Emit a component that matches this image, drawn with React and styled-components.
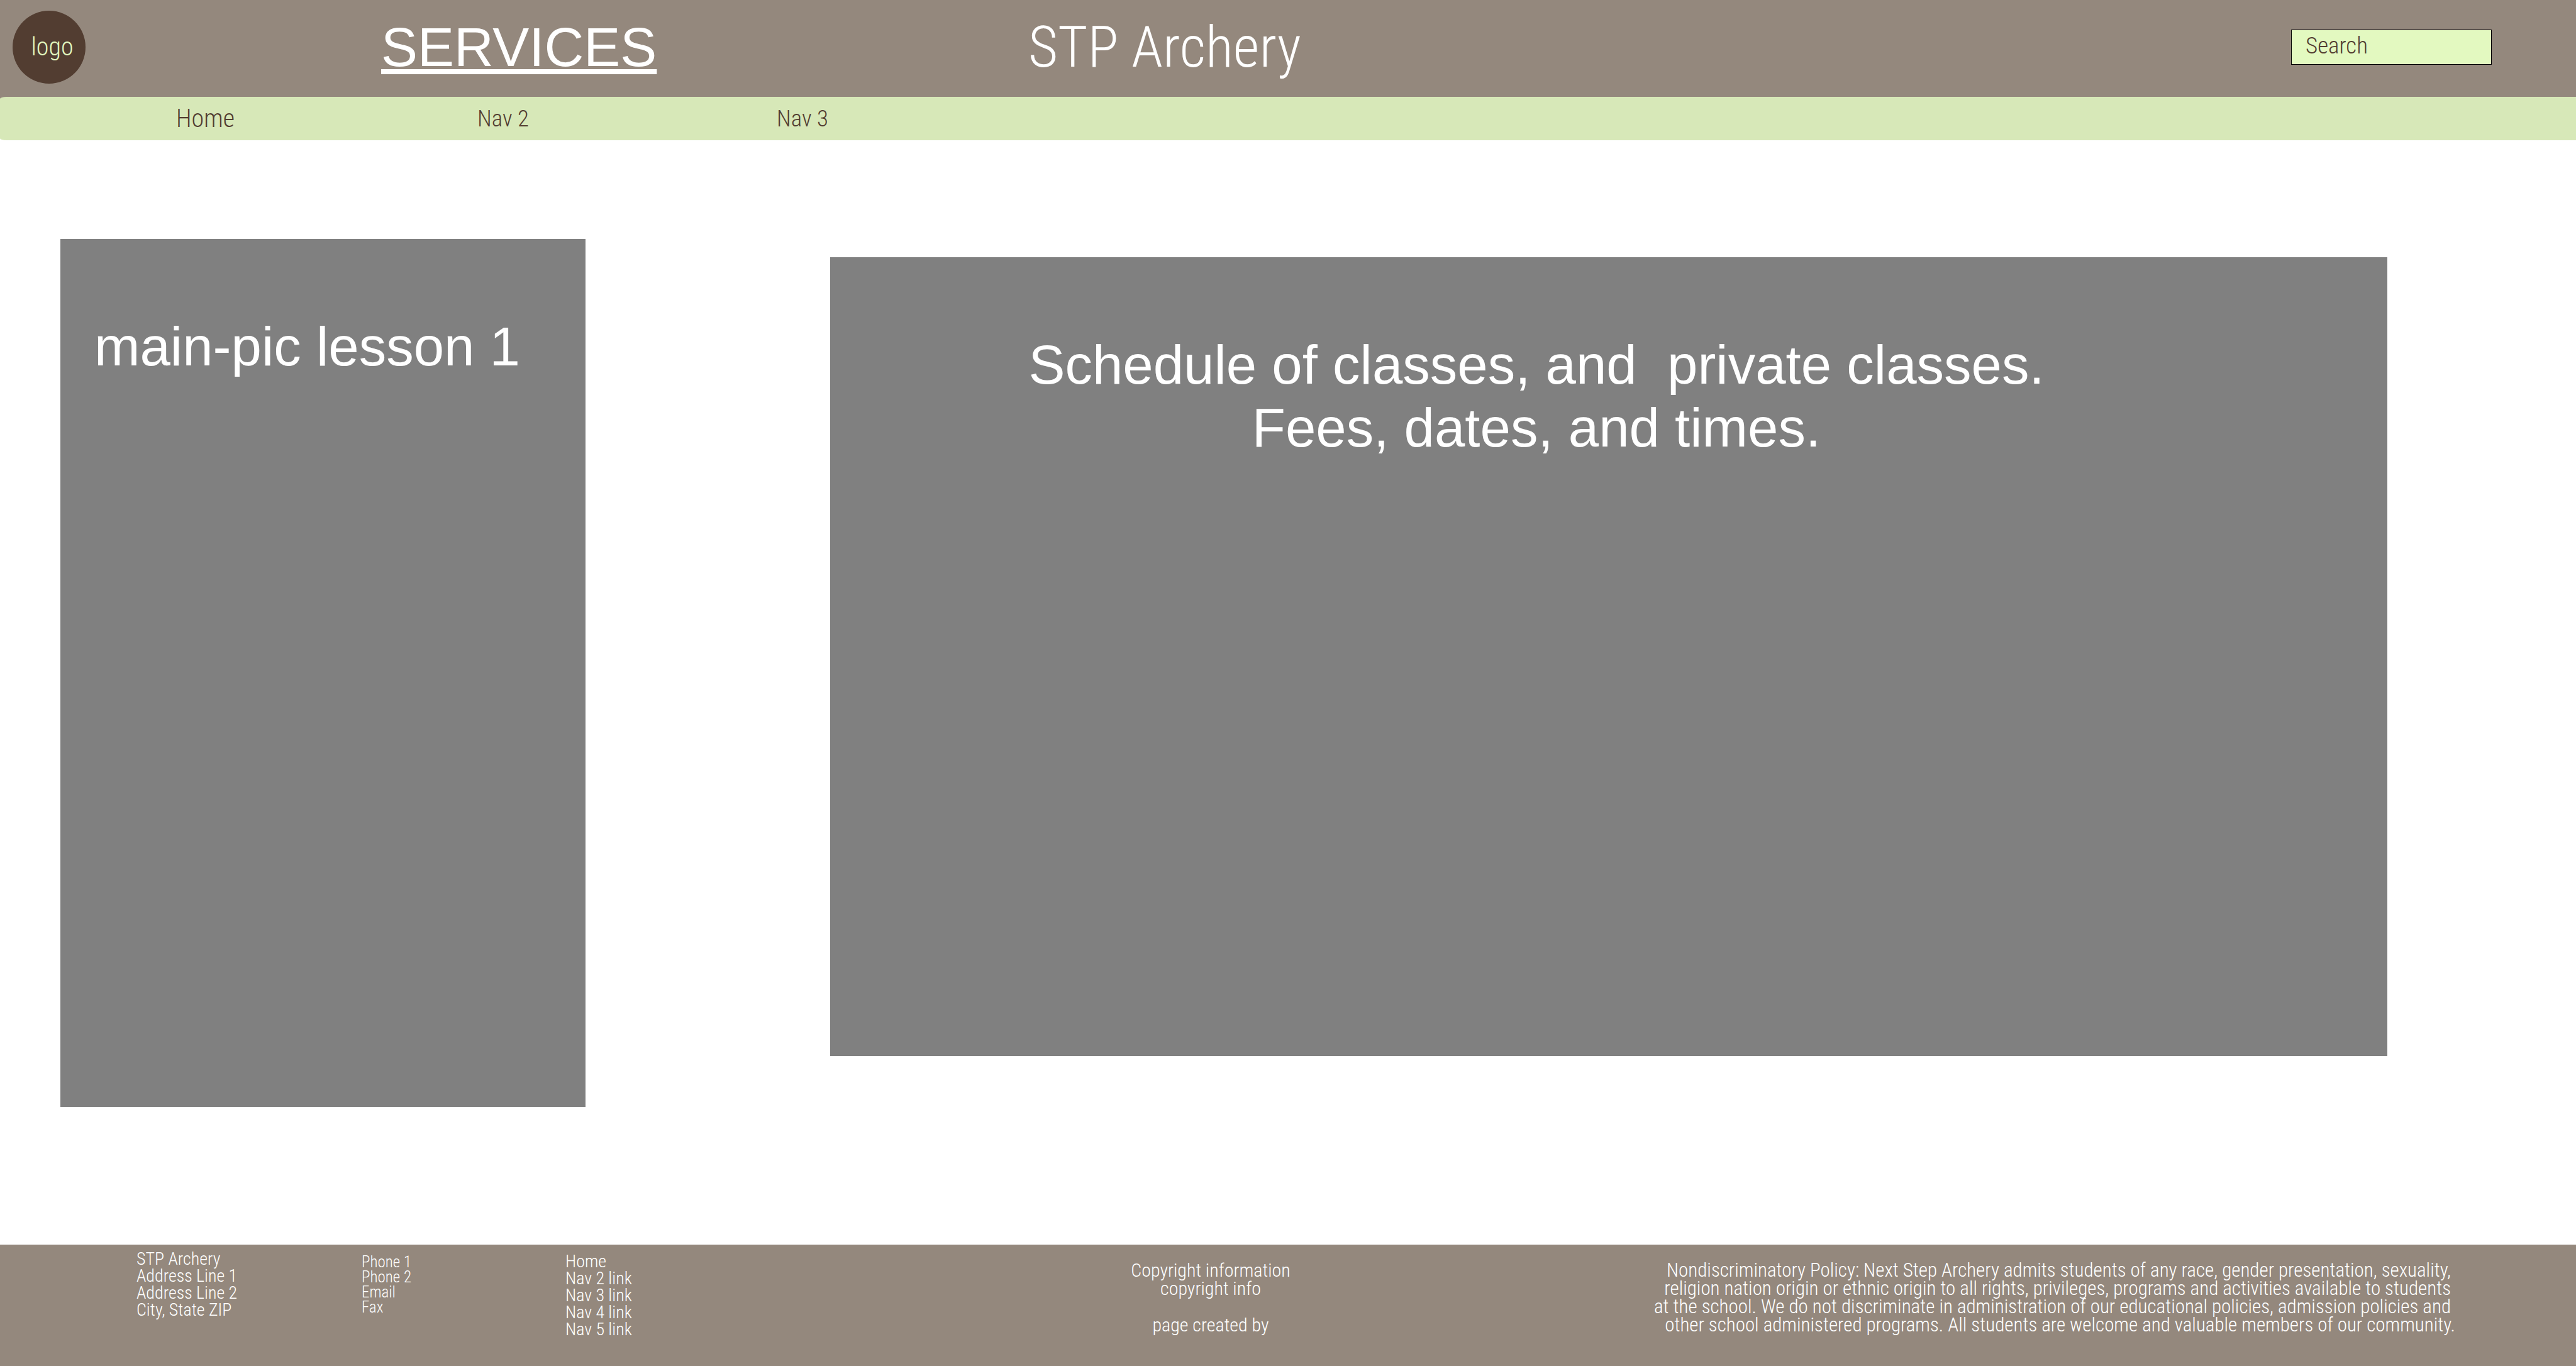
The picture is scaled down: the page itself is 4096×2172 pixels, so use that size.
import React from "react";
import styled, { createGlobalStyle } from "styled-components";

const color = {
  taupe: "#94887d",
  sage: "#d7e8b8",
  lime: "#e3f9c0",
  brown: "#523d31",
  panel: "#808080",
  white: "#ffffff",
};

const condensed = `"Roboto Condensed", Roboto, "Liberation Sans", sans-serif`;
const sans = `"Liberation Sans", Arial, sans-serif`;

const GlobalStyle = createGlobalStyle`
  *, *::before, *::after { box-sizing: border-box; }
  body { margin: 0; background: ${color.white}; font-family: ${condensed}; font-weight: 300; }
  h1, h2, p, ul, address { margin: 0; padding: 0; font-weight: inherit; font-style: normal; }
  ul { list-style: none; }
  a { color: inherit; text-decoration: none; }
`;

const Page = styled.div`
  min-height: 100vh;
  display: flex;
  flex-direction: column;
`;

const Header = styled.header`
  display: grid;
  grid-template-columns: 606fr 1029fr 2008fr 319fr 134fr;
  align-items: center;
  padding: 17px 0 21px;
  background: ${color.taupe};
  color: ${color.white};
`;

const Logo = styled.a`
  width: 116px;
  height: 116px;
  margin-left: 20px;
  padding-left: 10px;
  display: flex;
  align-items: center;
  justify-content: center;
  border-radius: 50%;
  background: ${color.brown};
  && { color: ${color.lime}; }
  font-size: 40px;
  line-height: 48px;
`;

const PageTitle = styled.h1`
  font: 400 87px/100px ${sans};
  text-decoration: underline;
`;

const SiteName = styled.p`
  font-size: 91px;
  line-height: 100px;
`;

const SearchBox = styled.input`
  width: 100%;
  height: 56px;
  padding: 0 22px 6px;
  border: 1px solid #000000;
  border-radius: 0;
  background: ${color.lime};
  color: ${color.brown};
  font: inherit;
  font-size: 37px;
  &::placeholder { color: ${color.brown}; opacity: 1; }
`;

const NavBand = styled.nav`
  background: linear-gradient(${color.taupe} 50%, ${color.white} 50%);
`;

const NavList = styled.ul`
  display: grid;
  grid-template-columns: 280fr 479fr 476fr 2861fr;
  padding: 11px 0 10px;
  border-radius: 10px 0 0 10px / 3px 0 0 3px;
  background: ${color.sage};
  color: ${color.brown};
`;

const NavItem = styled.li`
  font-size: ${(p) => (p.$current ? "40px" : "37px")};
  line-height: 48px;
  &:first-child { grid-column-start: 2; }
`;

const Main = styled.main`
  flex: 1;
  display: grid;
  grid-template-columns: 835fr 389fr 2476fr;
  align-items: start;
  margin: 0 300px 0 96px;
  padding: 157px 0 100px;
`;

const Panel = styled.section`
  padding-top: 121px;
  background: ${color.panel};
  color: ${color.white};
`;

const PicturePanel = styled(Panel)`
  aspect-ratio: 835 / 1380;
  padding-left: 54px;
`;

const SchedulePanel = styled(Panel)`
  grid-column: 3;
  aspect-ratio: 2476 / 1270;
  margin-top: 29px;
  padding-right: 230px;
  text-align: center;
`;

const PanelText = styled.h2`
  font: 400 87px/100px ${sans};
  white-space: pre-wrap;
`;

const Footer = styled.footer`
  display: grid;
  grid-template-columns: 217fr 358fr 324fr 701fr 650fr 1654fr 192fr;
  align-items: start;
  padding: 9px 0 45px;
  background: ${color.taupe};
  color: ${color.white};
`;

const Address = styled.address`
  grid-column: 2;
  font-size: 28px;
  line-height: 27px;
`;

const Contact = styled.ul`
  padding-top: 7px;
  font-size: 25px;
  line-height: 24px;
`;

const FooterLinks = styled.ul`
  padding-top: 4px;
  font-size: 28px;
  line-height: 27px;
`;

const FinePrint = styled.p`
  padding-top: 17px;
  font-size: 30px;
  line-height: 29px;
  white-space: pre;
  text-align: center;
`;

const Policy = styled(FinePrint)`
  font-size: 31px;
  text-align: right;
`;

const navItems = ["Home", "Nav 2", "Nav 3"];
const contactLines = ["Phone 1", "Phone 2", "Email", "Fax"];
const footerLinks = ["Home", "Nav 2 link", "Nav 3 link", "Nav 4 link", "Nav 5 link"];

const copyright = ["Copyright information", "copyright info", "", "page created by"].join("\n");

const policy = [
  "Nondiscriminatory Policy: Next Step Archery admits students of any race, gender presentation, sexuality, ",
  "religion nation origin or ethnic origin to all rights, privileges, programs and activities available to students ",
  "at the school. We do not discriminate in administration of our educational policies, admission policies and ",
  "other school administered programs. All students are welcome and valuable members of our community.",
].join("\n");

export default function App() {
  return (
    <>
      <GlobalStyle />
      <Page>
        <Header>
          <Logo href="#">logo</Logo>
          <PageTitle>SERVICES</PageTitle>
          <SiteName>STP Archery</SiteName>
          <SearchBox type="search" placeholder="Search" aria-label="Search" />
        </Header>
        <NavBand aria-label="Main">
          <NavList>
            {navItems.map((item, i) => (
              <NavItem key={item} $current={i === 0}>
                <a href="#">{item}</a>
              </NavItem>
            ))}
          </NavList>
        </NavBand>
        <Main>
          <PicturePanel>
            <PanelText>main-pic lesson 1</PanelText>
          </PicturePanel>
          <SchedulePanel>
            <PanelText>{"Schedule of classes, and  private classes.\nFees, dates, and times."}</PanelText>
          </SchedulePanel>
        </Main>
        <Footer>
          <Address>
            STP Archery
            <br />
            Address Line 1
            <br />
            Address Line 2
            <br />
            City, State ZIP
          </Address>
          <Contact>
            {contactLines.map((line) => (
              <li key={line}>{line}</li>
            ))}
          </Contact>
          <FooterLinks>
            {footerLinks.map((link) => (
              <li key={link}>
                <a href="#">{link}</a>
              </li>
            ))}
          </FooterLinks>
          <FinePrint>{copyright}</FinePrint>
          <Policy>{policy}</Policy>
        </Footer>
      </Page>
    </>
  );
}
